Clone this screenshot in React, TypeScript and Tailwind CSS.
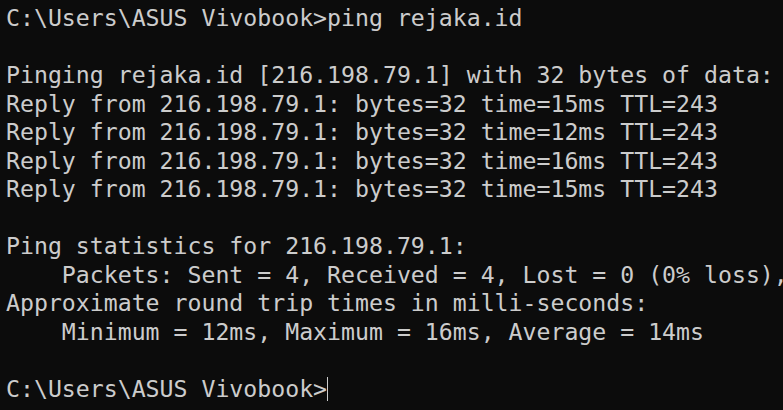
const lines = [
  "C:\\Users\\ASUS Vivobook>ping rejaka.id",
  "",
  "Pinging rejaka.id [216.198.79.1] with 32 bytes of data:",
  "Reply from 216.198.79.1: bytes=32 time=15ms TTL=243",
  "Reply from 216.198.79.1: bytes=32 time=12ms TTL=243",
  "Reply from 216.198.79.1: bytes=32 time=16ms TTL=243",
  "Reply from 216.198.79.1: bytes=32 time=15ms TTL=243",
  "",
  "Ping statistics for 216.198.79.1:",
  "    Packets: Sent = 4, Received = 4, Lost = 0 (0% loss),",
  "Approximate round trip times in milli-seconds:",
  "    Minimum = 12ms, Maximum = 16ms, Average = 14ms",
  "",
];

export default function App() {
  return (
    <main className="w-[783px] h-[410px] overflow-hidden bg-[#0c0c0c] text-[#cccccc] pl-[6px] pt-[4px] font-['DejaVu_Sans_Mono',monospace] text-[23.2px] leading-[28.55px]">
      {lines.map((l, i) => (
        <div key={i} className="whitespace-pre h-[28.55px]">
          {l}
        </div>
      ))}
      <div className="whitespace-pre h-[28.55px] flex items-center">
        <span>C:\Users\ASUS Vivobook&gt;</span>
        <span className="inline-block w-[1px] h-[24px] bg-[#cccccc]" />
      </div>
    </main>
  );
}
